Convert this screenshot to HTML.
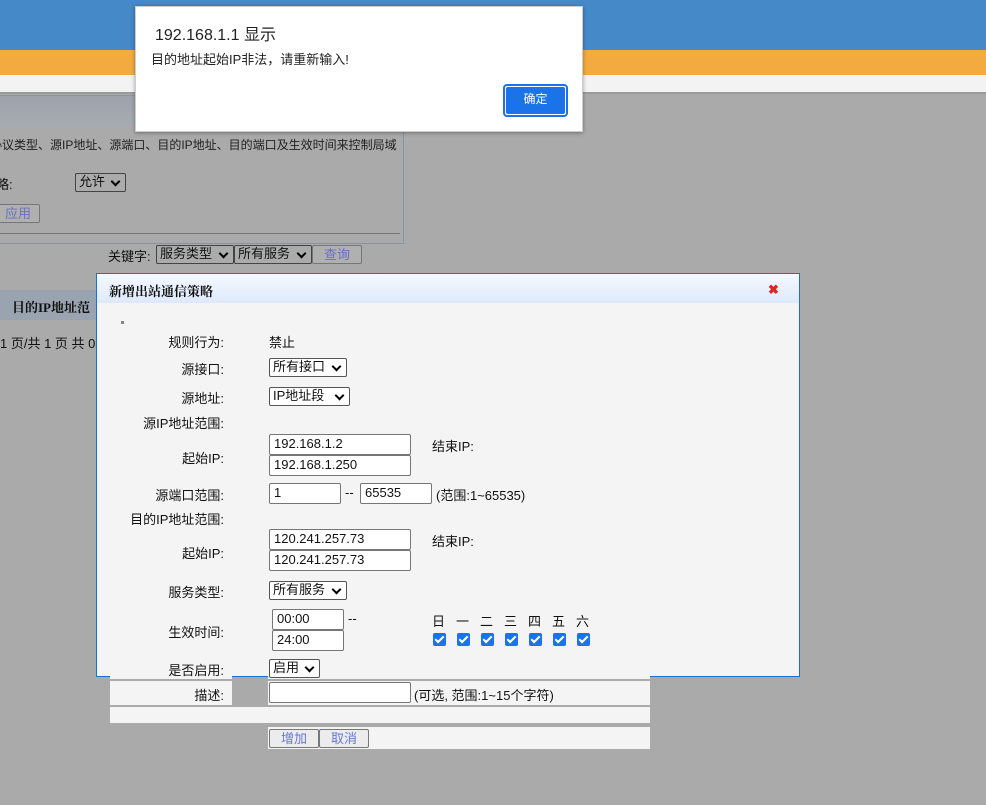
<!DOCTYPE html>
<html><head><meta charset="utf-8"><style>
*{margin:0;padding:0;box-sizing:border-box}
body{width:986px;height:805px;background:#aaaaaa;position:relative;overflow:hidden;font-family:"Liberation Sans","Noto Sans CJK SC",sans-serif;font-size:13px;color:#111}
.a{position:absolute;white-space:nowrap}
.sel{position:absolute;border:1px solid #555;background:#fff;border-radius:2px;font-size:13px;padding:0 3px;line-height:16px;height:19px}
.sel:after{content:"";position:absolute;right:6px;top:4px;width:5px;height:5px;border-right:2px solid #000;border-bottom:2px solid #000;transform:rotate(45deg)}
.dsel{background:#ababab;border-color:#444}
.inp{position:absolute;border:1px solid #767676;background:#fff;font-size:13px;padding-left:4px;line-height:18px;height:21px;border-radius:2px}
.btn{position:absolute;border:1px solid #777;background:#ececec;color:#6677dd;font-size:12px;text-align:center;line-height:17px;border-radius:2px}
.lbl{position:absolute;width:130px;text-align:right;font-size:13px;left:94px}
.cb{position:absolute;width:13px;height:13px;background:#1a73e8;border-radius:2px}
.cb:after{content:"";position:absolute;left:4px;top:1px;width:3px;height:7px;border-right:2px solid #fff;border-bottom:2px solid #fff;transform:rotate(45deg)}
</style></head><body>
<div class="a" style="left:0;top:0;width:986px;height:50px;background:#4589c9"></div>
<div class="a" style="left:0;top:50px;width:986px;height:25px;background:#f3ab3f"></div>
<div class="a" style="left:0;top:75px;width:986px;height:17px;background:#f3f3f3"></div>
<div class="a" style="left:0;top:92px;width:986px;height:2px;background:#999"></div>
<div class="a" style="left:-2px;top:95px;width:406px;height:149px;border:1px solid #8a93a0"></div>
<div class="a" style="left:0;top:96px;width:403px;height:30px;background:linear-gradient(#9ea3ab,#a6abb2)"></div>
<div class="a" style="left:-10px;top:136px;font-size:12px;color:#222">协议类型、源IP地址、源端口、目的IP地址、目的端口及生效时间来控制局域</div>
<div class="a" style="left:-4px;top:174px">略:</div>
<div class="sel dsel" style="left:75px;top:173px;width:51px">允许</div>
<div class="btn" style="left:-4px;top:204px;width:44px;background:#b0b0b0;color:#6a70c0;font-size:13px">应用</div>
<div class="a" style="left:0;top:233px;width:400px;height:1px;background:#777"></div>
<div class="a" style="left:108px;top:246px">关键字:</div>
<div class="sel dsel" style="left:156px;top:245px;width:78px">服务类型</div>
<div class="sel dsel" style="left:234px;top:245px;width:78px">所有服务</div>
<div class="btn" style="left:312px;top:245px;width:50px;background:#b0b0b0;color:#6a70c0;font-size:13px">查询</div>
<div class="a" style="left:0;top:290px;width:100px;height:30px;background:#9aa4b0"></div>
<div class="a" style="left:12px;top:297px;font-weight:bold;font-size:13px;font-family:'Liberation Serif','Noto Serif CJK SC',serif">目的IP地址范</div>
<div class="a" style="left:0;top:333px">1 页/共 1 页 共 0</div>
<div class="a" style="left:96px;top:273px;width:704px;height:404px;border:1px solid #1a6fd8;background:#f4f4f4"></div>
<div class="a" style="left:97px;top:274px;width:702px;height:29px;background:linear-gradient(#f6f9ff,#dde9fb)"></div>
<div class="a" style="left:109px;top:281px;font-weight:bold;font-size:13px;font-family:'Liberation Serif','Noto Serif CJK SC',serif">新增出站通信策略</div>
<div class="a" style="left:768px;top:283px;color:#e52020;font-size:13px;font-weight:bold;line-height:13px">✖</div>
<div class="a" style="left:121px;top:321px;width:3px;height:3px;background:#888"></div>
<div class="lbl" style="top:332px">规则行为:</div><div class="a" style="left:269px;top:332px">禁止</div>
<div class="lbl" style="top:359px">源接口:</div><div class="sel" style="left:269px;top:358px;width:78px">所有接口</div>
<div class="lbl" style="top:388px">源地址:</div><div class="sel" style="left:269px;top:387px;width:81px">IP地址段</div>
<div class="lbl" style="top:413px">源IP地址范围:</div>
<div class="lbl" style="top:448px">起始IP:</div>
<div class="inp" style="left:269px;top:434px;width:142px">192.168.1.2</div>
<div class="inp" style="left:269px;top:455px;width:142px">192.168.1.250</div>
<div class="a" style="left:432px;top:436px">结束IP:</div>
<div class="lbl" style="top:485px">源端口范围:</div>
<div class="inp" style="left:269px;top:483px;width:72px">1</div>
<div class="a" style="left:345px;top:485px">--</div>
<div class="inp" style="left:360px;top:483px;width:72px">65535</div>
<div class="a" style="left:436px;top:485px">(范围:1~65535)</div>
<div class="lbl" style="top:509px">目的IP地址范围:</div>
<div class="lbl" style="top:543px">起始IP:</div>
<div class="inp" style="left:269px;top:529px;width:142px">120.241.257.73</div>
<div class="inp" style="left:269px;top:550px;width:142px">120.241.257.73</div>
<div class="a" style="left:432px;top:531px">结束IP:</div>
<div class="lbl" style="top:582px">服务类型:</div><div class="sel" style="left:269px;top:581px;width:78px">所有服务</div>
<div class="lbl" style="top:622px">生效时间:</div>
<div class="inp" style="left:272px;top:609px;width:72px">00:00</div>
<div class="inp" style="left:272px;top:630px;width:72px">24:00</div>
<div class="a" style="left:348px;top:611px">--</div>
<div class="a" style="left:432px;top:611px">
<span style="position:absolute;left:0">日</span><span style="position:absolute;left:24px">一</span><span style="position:absolute;left:48px">二</span><span style="position:absolute;left:72px">三</span><span style="position:absolute;left:96px">四</span><span style="position:absolute;left:120px">五</span><span style="position:absolute;left:144px">六</span></div>
<div class="cb" style="left:433px;top:633px"></div><div class="cb" style="left:457px;top:633px"></div><div class="cb" style="left:481px;top:633px"></div><div class="cb" style="left:505px;top:633px"></div><div class="cb" style="left:529px;top:633px"></div><div class="cb" style="left:553px;top:633px"></div><div class="cb" style="left:577px;top:633px"></div>
<div class="a" style="left:110px;top:676px;width:122px;height:3px;background:#f4f4f4"></div>
<div class="a" style="left:268px;top:676px;width:382px;height:3px;background:#f4f4f4"></div>
<div class="lbl" style="top:660px">是否启用:</div><div class="sel" style="left:269px;top:659px;width:51px">启用</div>
<div class="a" style="left:110px;top:681px;width:122px;height:24px;background:#f4f4f4"></div>
<div class="a" style="left:268px;top:681px;width:382px;height:24px;background:#f4f4f4"></div>
<div class="lbl" style="top:685px">描述:</div>
<div class="inp" style="left:269px;top:682px;width:142px"></div>
<div class="a" style="left:414px;top:685px">(可选, 范围:1~15个字符)</div>
<div class="a" style="left:110px;top:707px;width:540px;height:16px;background:#f4f4f4"></div>
<div class="a" style="left:268px;top:727px;width:382px;height:22px;background:#f4f4f4"></div>
<div class="btn" style="left:269px;top:729px;width:50px;font-size:13px">增加</div>
<div class="btn" style="left:319px;top:729px;width:50px;font-size:13px">取消</div>
<div class="a" style="left:135px;top:6px;width:448px;height:126px;background:#fff;box-shadow:0 1px 4px rgba(0,0,0,.35);border:1px solid #ccc"></div>
<div class="a" style="left:155px;top:21px;font-size:16px;color:#222">192.168.1.1 显示</div>
<div class="a" style="left:151px;top:49px;font-size:13px;color:#222">目的地址起始IP非法，请重新输入!</div>
<div class="a" style="left:503px;top:84px;width:65px;height:33px;border:2px solid #1a73e8;border-radius:4px;padding:1px"><div style="width:100%;height:100%;background:#1a73e8;border-radius:2px;color:#fff;text-align:center;line-height:25px;font-size:12px">确定</div></div>
</body></html>
